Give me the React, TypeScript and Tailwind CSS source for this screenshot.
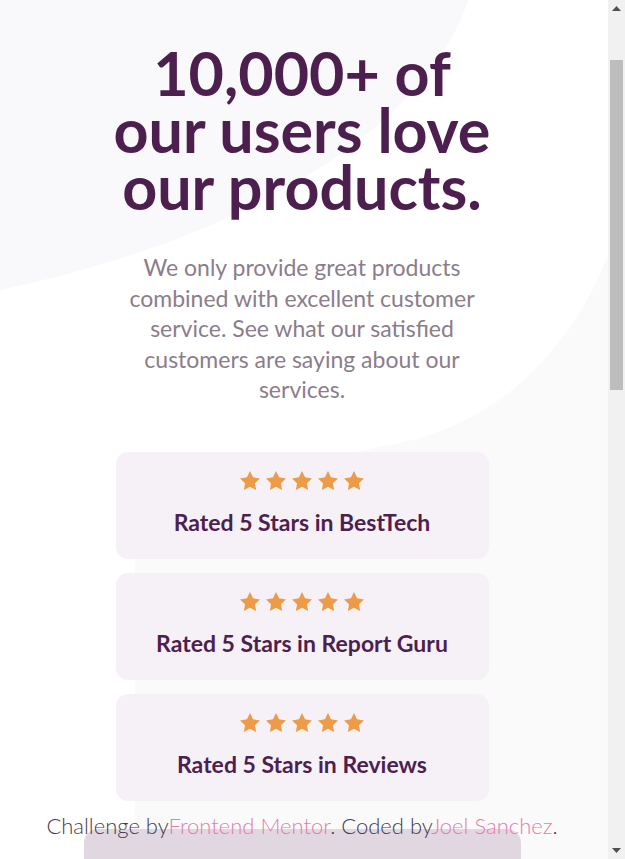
import React from "react";

const Star = () => (
  <svg width="20" height="19" viewBox="0 0 17 16" fill="#ee9b47">
    <path d="M8.5 0l2.6 5.3 5.9.9-4.3 4.1 1 5.8-5.2-2.7-5.2 2.7 1-5.8L0 6.2l5.9-.9z" />
  </svg>
);

const Card = ({ title }: { title: string }) => (
  <div className="h-[107px] w-[373px] rounded-[12px] bg-[#f6f0f7] flex flex-col items-center pt-[19px]">
    <div className="flex gap-[6px] h-[19px] items-center">
      <Star />
      <Star />
      <Star />
      <Star />
      <Star />
    </div>
    <div className="mt-[20px] text-[23px] leading-[24px] font-bold text-[#4d1f4f] whitespace-nowrap">
      {title}
    </div>
  </div>
);

export default function App() {
  return (
    <div
      className="flex h-[859px] w-full overflow-hidden bg-white"
      style={{ fontFamily: "Lato, 'Noto Sans', sans-serif" }}
    >
      <div className="relative h-full w-[608px] shrink-0 overflow-hidden">
        <svg
          className="absolute left-0 top-0"
          width="608"
          height="859"
          viewBox="0 0 608 859"
        >
          <path d="M0 0 L468 0 C 430 120 260 235 0 290 Z" fill="#f9f8fa" />
          <path
            d="M608 255 C 570 350 500 425 390 445 C 250 472 140 495 135 560 L135 859 L608 859 Z"
            fill="#fafafb"
          />
        </svg>

        <div className="relative flex flex-col items-center pr-[4px]">
          <h1 className="mt-[44px] text-center text-[61px] leading-[57px] font-bold text-[#4d1f4f] whitespace-nowrap">
            10,000+ of
            <br />
            our users love
            <br />
            our products.
          </h1>
          <p className="mt-[37px] text-center text-[23px] leading-[30.6px] text-[#8b7d8c] whitespace-nowrap">
            We only provide great products
            <br />
            combined with excellent customer
            <br />
            service. See what our satisfied
            <br />
            customers are saying about our
            <br />
            services.
          </p>
          <div className="mt-[47px] flex flex-col gap-[14px]">
            <Card title="Rated 5 Stars in BestTech" />
            <Card title="Rated 5 Stars in Report Guru" />
            <Card title="Rated 5 Stars in Reviews" />
          </div>
          <div className="mt-[28px] h-[300px] w-[437px] rounded-[14px] bg-[#e1d7e1]" />
        </div>

        <div className="absolute left-0 top-[812px] w-full pr-[4px] text-center text-[22px] leading-[28px] font-light text-[#4a3a4e] whitespace-nowrap">
          Challenge by<a className="text-[#e57cab]">Frontend Mentor</a>. Coded by
          <a className="text-[#e57cab]">Joel Sanchez</a>.
        </div>
      </div>

      <div className="flex h-full w-[17px] shrink-0 flex-col bg-[#f1f1f1]">
        <div className="flex h-[17px] items-center justify-center">
          <svg width="9" height="5" viewBox="0 0 9 5">
            <path d="M0 5 L4.5 0 L9 5 Z" fill="#505050" />
          </svg>
        </div>
        <div className="relative flex-1">
          <div className="absolute left-[2px] right-[2px] top-[43px] h-[330px] bg-[#bdbdbd]" />
        </div>
        <div className="flex h-[17px] items-center justify-center">
          <svg width="9" height="5" viewBox="0 0 9 5">
            <path d="M0 0 L4.5 5 L9 0 Z" fill="#505050" />
          </svg>
        </div>
      </div>
    </div>
  );
}
